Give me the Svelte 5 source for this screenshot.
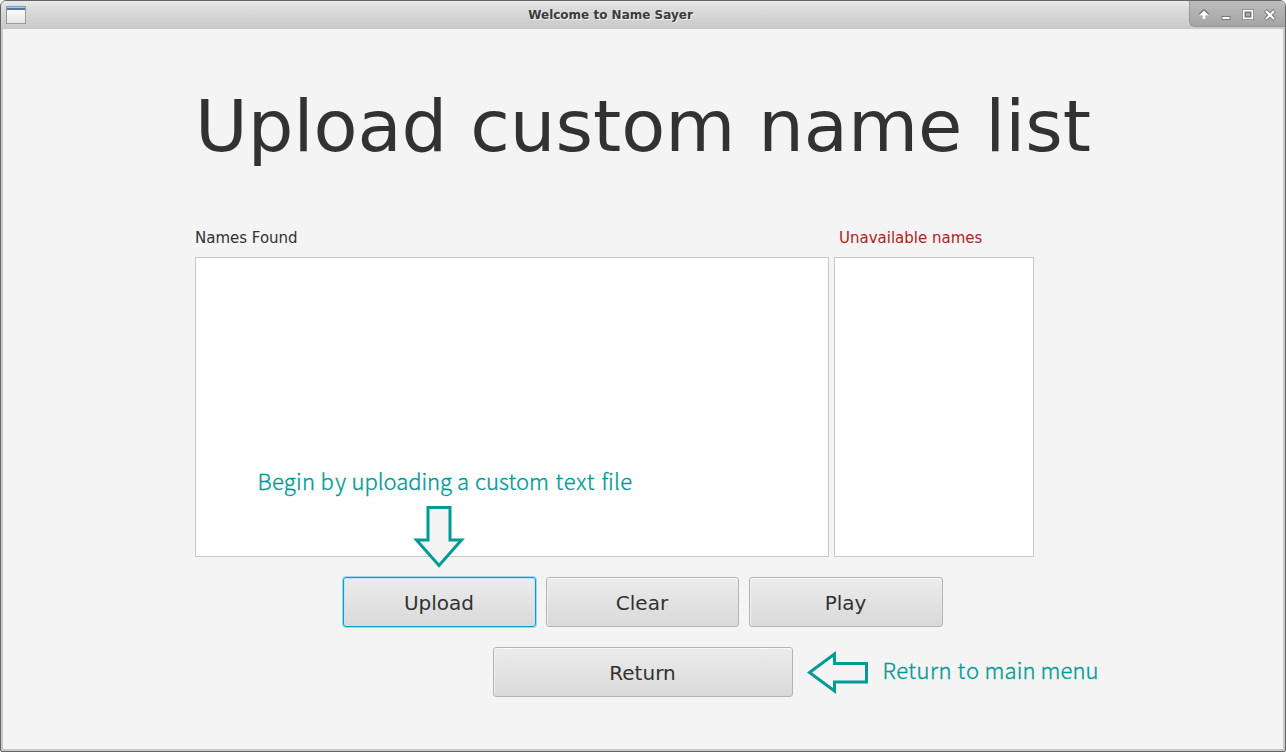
<script>
  const actions = ['Upload', 'Clear', 'Play'];

  // Each word of a note: text, left edge, drawn width
  const notes = [
    { y: 490, words: [['Begin', 257.5, 57.5], ['by', 320.5, 25.5], ['uploading', 351.5, 100.5], ['a', 457, 11.5], ['custom', 475, 74], ['text', 555.5, 39], ['file', 601.5, 30.5]] },
    { y: 679, words: [['Return', 882.5, 69], ['to', 957.5, 21.5], ['main', 984.5, 51], ['menu', 1040.5, 58]] }
  ];
</script>

<div class="window">
  <header>
    <svg class="app-icon" width="20" height="18" viewBox="0 0 20 18">
      <defs>
        <linearGradient id="sheet" x2="0" y2="1"><stop stop-color="#fff" /><stop offset="1" stop-color="#e6e7e3" /></linearGradient>
      </defs>
      <rect x=".5" y=".5" width="19" height="17" fill="url(#sheet)" stroke="#999" />
      <rect x="1" y="1" width="18" height="1" fill="#b5c5d9" />
      <rect x="1" y="2" width="18" height="2" fill="#4579b4" />
    </svg>
    <span class="title">Welcome to Name Sayer</span>
    <div class="controls">
      <svg width="97" height="26" viewBox="0 0 97 26">
        <g fill="none" stroke="#777" stroke-width="4">
          <path d="M15 18v-5h-3l3-3 3 3h-3" stroke-linejoin="round" stroke-width="3.600" />
          <path d="M32.500 17h9" />
          <path d="M76.500 9.500l9 9M85.500 9.500l-9 9" />
        </g>
        <path d="M13.500 18v-3.500h-3.500l5-5 5 5h-3.500v3.500z" fill="#fff" />
        <path d="M33.500 17h7" stroke="#fff" stroke-width="2" />
        <rect x="54.500" y="9.500" width="9" height="8" fill="#aaa" stroke="#777" stroke-width="3" />
        <rect x="54.500" y="9.500" width="9" height="8" fill="#aaa" stroke="#fff" stroke-width="1.500" />
        <rect x="56.500" y="11.500" width="5" height="4" fill="none" stroke="#777" />
        <path d="M77 10l8 8M85 10l-8 8" stroke="#fff" stroke-width="2.200" />
      </svg>
    </div>
  </header>

  <main>
    <h1>Upload custom name list</h1>
    <div class="lists">
      <section class="found">
        <h2>Names Found</h2>
        <div class="list"></div>
      </section>
      <section class="missing">
        <h2>Unavailable names</h2>
        <div class="list"></div>
      </section>
    </div>
    <div class="actions">
      {#each actions as action, i}
        <button class:focused={i === 0}>{action}</button>
      {/each}
    </div>
    <div class="back"><button>Return</button></div>
  </main>

  <svg class="notes" width="1286" height="752" viewBox="0 0 1286 752">
    <g stroke="#009a97" stroke-width="3" fill="#f4f4f4">
      <path d="M428 507.500h22v32.500h11.500L439 565.500 416.500 540H428z" />
      <path d="M866.500 663.500v18.500H834.500v9L809.500 672.500l25-18.500v9.500z" />
    </g>
    {#each notes as note}
      <text y={note.y}>
        {#each note.words as [word, x, width]}
          <tspan {x} textLength={width}>{word}</tspan>{' '}
        {/each}
      </text>
    {/each}
  </svg>
</div>

<style>
  :global(body) { margin: 0; background: #fff; }
  .window {
    position: relative;
    box-sizing: border-box;
    width: 1286px;
    height: 752px;
    overflow: hidden;
    border: 1px solid #656565;
    border-radius: 6px 6px 2px 2px;
    background: #c9c9c9;
    font-family: "DejaVu Sans", sans-serif;
    color: #323232;
  }
  header {
    display: grid;
    grid-template-columns: 97px 1fr 96px;
    align-items: start;
    height: 28px;
    background: linear-gradient(#e9e9e9, #dcdcdc 25%, #c9c9c9);
  }
  .app-icon { margin: 5px 0 0 5px; }
  .title {
    text-align: center;
    font-size: 12px;
    font-weight: bold;
    line-height: 28px;
    margin-right: 66px;
    color: #3b3b3b;
    text-shadow: 1px 1px #f0f0f0;
  }
  .controls {
    height: 26px;
    box-sizing: border-box;
    background: linear-gradient(#bcbcbc, #a5a5a5);
    border-left: 1px solid #969696;
    border-bottom: 1px solid #969696;
    border-bottom-left-radius: 6px;
  }
  .controls svg { display: block; margin-left: -1px; }
  main {
    display: flex;
    flex-direction: column;
    height: 720px;
    margin: 0 2px;
    background: #f4f4f4;
  }
  h1 {
    margin: 55px 0 0 192px;
    font-size: 72px;
    line-height: 84px;
    font-weight: normal;
    white-space: nowrap;
  }
  .lists { display: flex; gap: 5px; margin: 59px 0 0 192px; }
  .found { width: 634px; }
  .missing { width: 200px; }
  h2 { margin: 0; height: 30px; font-size: 15px; line-height: 22px; font-weight: normal; }
  .missing h2 { padding-left: 5px; color: #b22222; }
  .list { box-sizing: border-box; height: 300px; background: #fff; border: 1px solid #c8c8c8; }
  .actions { display: grid; grid-template-columns: 193px 193px 194px; gap: 10px; margin: 20px 0 0 340px; }
  button {
    box-sizing: border-box;
    width: 100%;
    height: 50px;
    padding: 2px 1px 0 0;
    border: 1px solid #b5b5b5;
    border-radius: 3px;
    background: linear-gradient(#ececec, #d9d9d9);
    box-shadow: inset 0 1px #fafafa, inset 1px 0 #eeeeee;
    font: 20px "DejaVu Sans", sans-serif;
    color: #323232;
  }
  .focused { border-color: #039ed3; box-shadow: 0 0 0 1px #9ddaf0, inset 0 0 0 1px #cae4ef; }
  .back { margin: 20px 0 0 490px; }
  .back button { width: 300px; }
  .notes { position: absolute; left: -1px; top: -1px; pointer-events: none; }
  .notes text { font: 300 22px "Noto Sans CJK KR", sans-serif; fill: #009a97; stroke: #009a97; stroke-width: 0.35px; }
</style>
